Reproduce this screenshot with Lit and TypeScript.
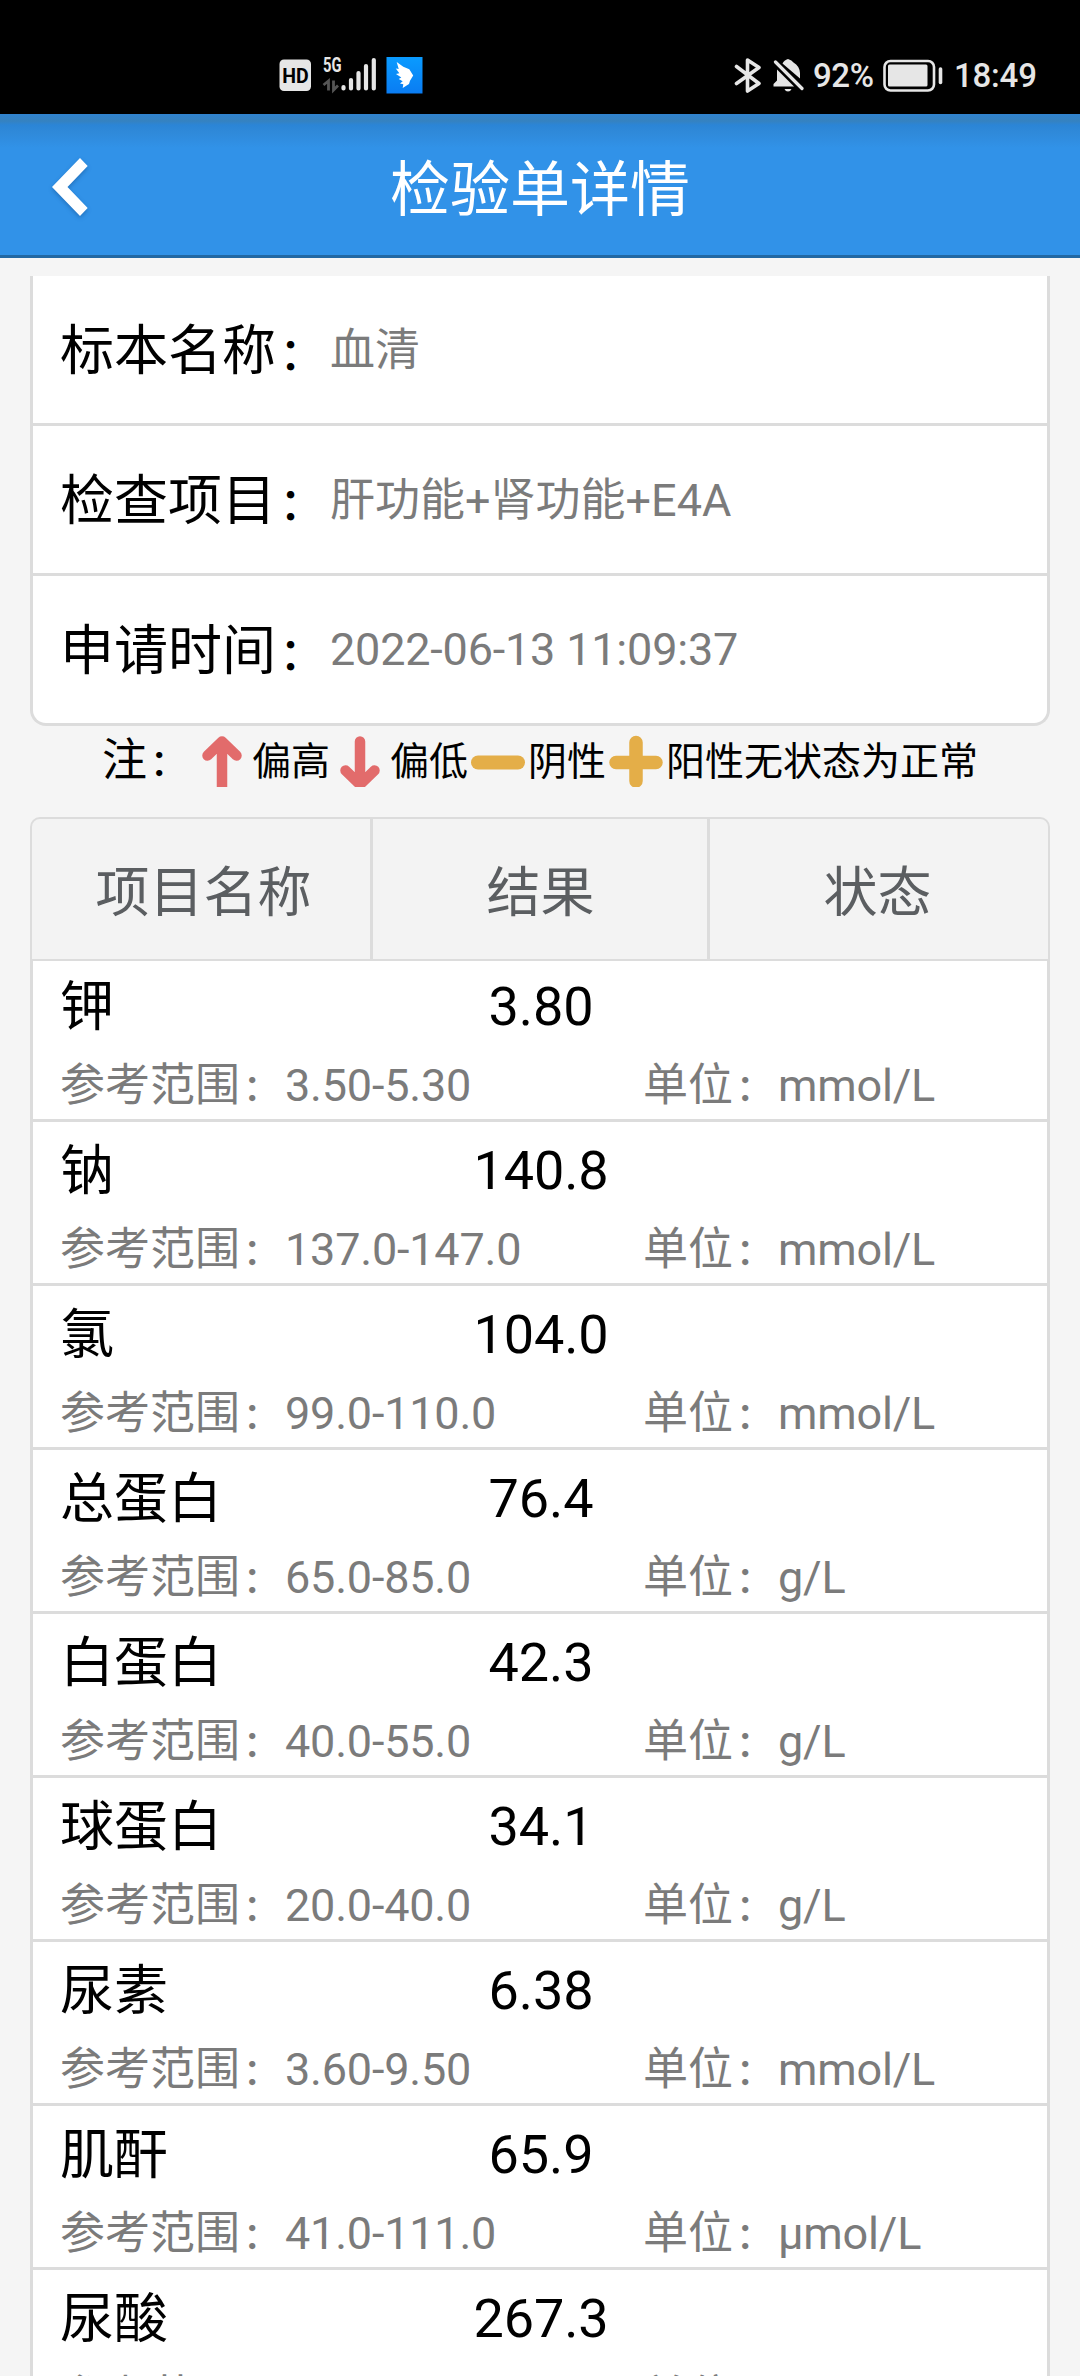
import { LitElement, html, css, svg } from "lit";
import { customElement } from "lit/decorators.js";

interface LabItem { name: string; value: string; range: string; unit: string; }

const INFO = [
  { label: "标本名称", value: "血清", kind: "" },
  { label: "检查项目", value: "肝功能+肾功能+E4A", kind: "" },
  { label: "申请时间", value: "2022-06-13 11:09:37", kind: "date" },
];

const ITEMS: LabItem[] = [
  { name: "钾", value: "3.80", range: "3.50-5.30", unit: "mmol/L" },
  { name: "钠", value: "140.8", range: "137.0-147.0", unit: "mmol/L" },
  { name: "氯", value: "104.0", range: "99.0-110.0", unit: "mmol/L" },
  { name: "总蛋白", value: "76.4", range: "65.0-85.0", unit: "g/L" },
  { name: "白蛋白", value: "42.3", range: "40.0-55.0", unit: "g/L" },
  { name: "球蛋白", value: "34.1", range: "20.0-40.0", unit: "g/L" },
  { name: "尿素", value: "6.38", range: "3.60-9.50", unit: "mmol/L" },
  { name: "肌酐", value: "65.9", range: "41.0-111.0", unit: "μmol/L" },
  { name: "尿酸", value: "267.3", range: "", unit: "" },
];

const legendIcon = (shape: unknown) =>
  html`<svg class="mark" viewBox="0 0 60 60" width="60" height="60">${shape}</svg>`;

const up = svg`<path d="M30 66V15M15.5 28.500L30 14.500L44.500 28.500" fill="none" stroke="#e26b6b" stroke-width="10.500" stroke-linecap="round" stroke-linejoin="round"/>`;
const down = svg`<path d="M30 14.500V56M15.500 43.500L30 57.500L44.500 43.500" fill="none" stroke="#e26b6b" stroke-width="10.500" stroke-linecap="round" stroke-linejoin="round"/>`;
const minus = svg`<path d="M10 35.500H50" fill="none" stroke="#e4ae48" stroke-width="14" stroke-linecap="round"/>`;
const plus = svg`<path d="M10 35.500H50M30 15.500V54" fill="none" stroke="#e4ae48" stroke-width="13.500" stroke-linecap="round"/>`;

const colon = html`<span class="colon">：</span>`;

@customElement("app-root")
export class AppRoot extends LitElement {
  static styles = css`
    :host {
      display: block;
      width: 1080px;
      height: 2376px;
      overflow: hidden;
      background: #f5f5f5;
      color: #000;
      font-family: Roboto, "Noto Sans CJK SC", sans-serif;
    }
    * { box-sizing: border-box; }
    svg { display: block; flex: none; }
    .colon { font-size: 0.82em; padding-left: 0.079em; padding-right: 0.1405em; font-weight: 500; }
    .status {
      height: 114px;
      background: #000;
      color: #e6e6e6;
      display: flex;
      align-items: flex-start;
      padding: 56px 40px 0 279px;
      font-size: 33px;
      font-weight: 500;
      line-height: 39px;
      white-space: nowrap;
    }
    .spacer { flex: 1; }
    .pct { margin-left: 9px; width: 69px; letter-spacing: -0.4px; }
    .clock { margin-left: 10px; width: 86px; letter-spacing: -0.2px; }
    .bar {
      height: 144px;
      border-bottom: 3px solid #2268a3;
      background: linear-gradient(#3083cf, #3582c0 7px, #2b85d6 11px, #2f89d9 18px, #3192e8 34px);
      display: grid;
      grid-template-columns: 140px 1fr 140px;
      align-items: center;
      color: #fff;
    }
    .title { margin-top: 13px; text-align: center; font-size: 60px; line-height: 88px; }
    .back { margin: 4px 0 0 49px; overflow: visible; filter: drop-shadow(0 2px 2px rgba(0, 40, 90, 0.3)); }
    .info {
      margin: 18px 30px 0;
      background: #fff;
      border: 3px solid #dcdcdc;
      border-top: 0;
      border-radius: 0 0 16px 16px;
    }
    .line {
      height: 150px;
      border-bottom: 3px solid #dcdcdc;
      display: flex;
      align-items: center;
      padding-left: 27px;
    }
    .line:last-child { border-bottom: 0; height: 147px; }
    .label { width: 270px; padding-top: 8px; font-size: 54px; line-height: 78px; white-space: nowrap; }
    .val { padding-top: 2px; font-size: 45px; line-height: 66px; color: #7b7b7b; }
    .val.date { padding-top: 0; letter-spacing: -0.2px; }
    .legend {
      height: 91px;
      display: flex;
      justify-content: center;
      align-items: flex-start;
      font-size: 39px;
      line-height: 72px;
      white-space: nowrap;
    }
    .legend .note { width: 90px; font-size: 45px; line-height: 69px; }
    .mark { margin-top: 1px; }
    .table { margin: 0 30px; }
    .head {
      height: 144px;
      border: 2px solid #dcdcdc;
      border-radius: 10px 10px 0 0;
      background: #f3f3f3;
      color: #5b5e61;
      display: grid;
      grid-template-columns: 341px 337px 1fr;
      font-size: 54px;
    }
    .head div {
      display: flex;
      align-items: center;
      justify-content: center;
      border-right: 3px solid #dcdcdc;
      padding: 0 0 2px 1px;
    }
    .head div:first-child { padding-left: 5px; }
    .head div:last-child { border-right: 0; padding: 0 3px 2px 0; }
    .rows {
      background: #fff;
      border: solid #dcdcdc;
      border-width: 0 3px;
    }
    .item {
      height: 164px;
      border-bottom: 3px solid #dcdcdc;
      padding: 10px 0 0 27px;
    }
    .item:first-child { height: 161px; padding-top: 7px; }
    .top {
      display: grid;
      grid-template-columns: 311px 340px 1fr;
      font-size: 54px;
      line-height: 78px;
    }
    .name { padding-top: 1px; }
    .num { text-align: center; letter-spacing: -0.1px; }
    .sub {
      display: grid;
      grid-template-columns: 583px 1fr;
      font-size: 45px;
      line-height: 66px;
      margin-top: 6px;
      color: #7b7b7b;
      white-space: nowrap;
    }
    .latin { letter-spacing: -0.2px; }
  `;

  private statusBar() {
    return html`<div class="status">
      <svg width="160" height="44" viewBox="279 56 160 44">
        <rect x="279.500" y="59.500" width="31.500" height="31.500" rx="4.500" fill="#e6e6e6"/>
        <text x="295.500" y="83" text-anchor="middle" font-size="20.500" font-weight="700" fill="#000" textLength="26.500" lengthAdjust="spacingAndGlyphs">HD</text>
        <text x="323" y="72.300" font-size="20" font-weight="700" fill="#e6e6e6" textLength="18.500" lengthAdjust="spacingAndGlyphs">5G</text>
        <path d="M323.500 85L328.500 81V90.500M333.500 80.500V90L338 85.500" fill="none" stroke="#555" stroke-width="2.800"/>
        <g stroke="#e6e6e6" stroke-width="4.200" stroke-linecap="round">
          <path d="M343.500 87V88.500M351 80V88.500M358.500 73V88.500M366 66V88.500M373.800 60V88.500"/>
        </g>
        <defs><linearGradient id="g" x1="0" y1="0" x2="0" y2="1"><stop offset="0" stop-color="#0a9bff"/><stop offset="1" stop-color="#0a7cf2"/></linearGradient></defs>
        <rect x="386.500" y="57" width="36" height="36.500" fill="url(#g)"/>
        <path d="M396.700 62L403.300 66.800L409.300 69.300L413.200 75.500L410 80.700L409 84L402.700 87.900L403.300 84.300L400 83.500L402.700 81.300L398.700 79L401.300 77.500L396 74L399.300 73.300L395.800 68.500L398.700 69Z" fill="#fff"/>
      </svg>
      <div class="spacer"></div>
      <svg width="70" height="40" viewBox="734 56 70 40">
        <path d="M736.500 66.500L759 83.500L747.500 91V60L759 67.500L736.500 83.500" fill="none" stroke="#e6e6e6" stroke-width="3.600" stroke-linejoin="round" stroke-linecap="round"/>
        <path d="M773.500 86.500V84L777 80.500V69.500L794 86.500ZM782.500 63.500Q784 60 788 59Q792 60 793.500 62.500Q799.500 66 800 73V78.500Z" fill="#e6e6e6"/>
        <path d="M775.500 62L802 88.500" stroke="#e6e6e6" stroke-width="3.200" stroke-linecap="round"/>
        <path d="M784.500 89H791.500Q790.500 91.500 788 91.500Q785.500 91.500 784.500 89Z" fill="#e6e6e6"/>
      </svg>
      <div class="pct">92%</div>
      <svg width="62" height="40" viewBox="882 56 62 40">
        <rect x="884.500" y="61" width="49.500" height="29.500" rx="6" fill="none" stroke="#e6e6e6" stroke-width="2.600"/>
        <rect x="888" y="64.500" width="39.500" height="22" rx="1.500" fill="#e6e6e6"/>
        <path d="M940.500 69V82.500" stroke="#e6e6e6" stroke-width="3.600" stroke-linecap="round"/>
      </svg>
      <div class="clock">18:49</div>
    </div>`;
  }

  render() {
    return html`
      ${this.statusBar()}
      <div class="bar">
        <svg class="back" width="44" height="66" viewBox="0 0 44 66">
          <path d="M31 4L38.700 12L18.500 33L38.700 54L31 62L3 33Z" fill="#fff"/>
        </svg>
        <div class="title">检验单详情</div>
      </div>
      <div class="info">
        ${INFO.map((f) => html`<div class="line"><div class="label">${f.label}${colon}</div><div class="val ${f.kind}">${f.value}</div></div>`)}
      </div>
      <div class="legend">
        <span class="note">注${colon}</span>${legendIcon(up)}<span>偏高</span>${legendIcon(down)}<span>偏低</span>${legendIcon(minus)}<span>阴性</span>${legendIcon(plus)}<span>阳性无状态为正常</span>
      </div>
      <div class="table">
        <div class="head"><div>项目名称</div><div>结果</div><div>状态</div></div>
        <div class="rows">
          ${ITEMS.map((i) => html`<div class="item">
            <div class="top"><span class="name">${i.name}</span><span class="num">${i.value}</span></div>
            <div class="sub"><span>参考范围${colon}<span class="latin">${i.range}</span></span><span>单位${colon}<span class="latin">${i.unit}</span></span></div>
          </div>`)}
        </div>
      </div>
    `;
  }
}
